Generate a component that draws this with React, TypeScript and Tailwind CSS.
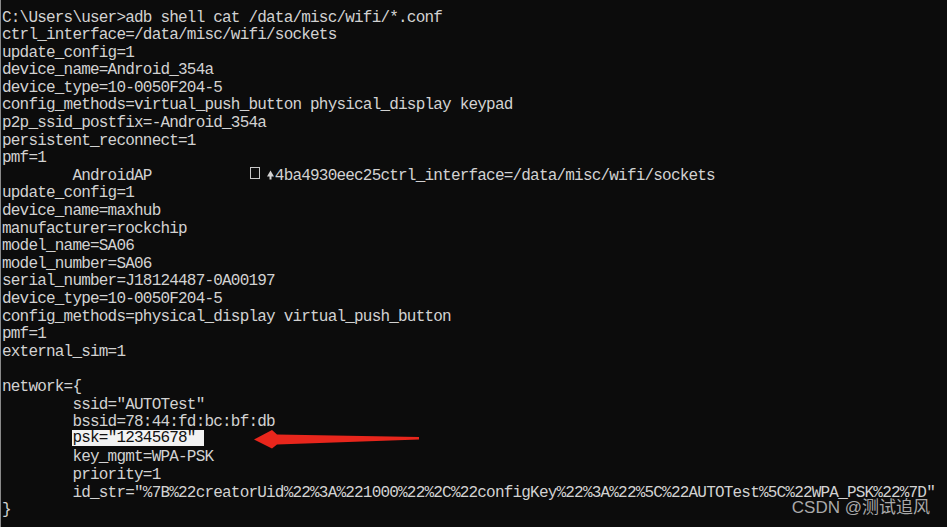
import React from "react";

const before = [
  "C:\\Users\\user>adb shell cat /data/misc/wifi/*.conf",
  "ctrl_interface=/data/misc/wifi/sockets",
  "update_config=1",
  "device_name=Android_354a",
  "device_type=10-0050F204-5",
  "config_methods=virtual_push_button physical_display keypad",
  "p2p_ssid_postfix=-Android_354a",
  "persistent_reconnect=1",
  "pmf=1",
];

const middle = [
  "update_config=1",
  "device_name=maxhub",
  "manufacturer=rockchip",
  "model_name=SA06",
  "model_number=SA06",
  "serial_number=J18124487-0A00197",
  "device_type=10-0050F204-5",
  "config_methods=physical_display virtual_push_button",
  "pmf=1",
  "external_sim=1",
  "",
  "network={",
  '        ssid="AUTOTest"',
  "        bssid=78:44:fd:bc:bf:db",
];

const after = [
  "        key_mgmt=WPA-PSK",
  "        priority=1",
  '        id_str="%7B%22creatorUid%22%3A%221000%22%2C%22configKey%22%3A%22%5C%22AUTOTest%5C%22WPA_PSK%22%7D"',
  "}",
];

function Line({ children }: { children?: React.ReactNode }) {
  return <div className="h-[17.6px] whitespace-pre">{children}</div>;
}

export default function App() {
  return (
    <div className="relative w-[947px] h-[527px] overflow-hidden bg-[#0c0c0c]">
      <div
        className="flex h-full flex-col border-l border-[#8a8a8a] pl-px pt-[9.5px] text-[16px] leading-[17.6px] tracking-[-0.8px] text-[#d2d2d2]"
        style={{ fontFamily: '"Liberation Mono", "Courier New", monospace' }}
      >
        {before.map((l, i) => (
          <Line key={"b" + i}>{l}</Line>
        ))}
        <Line>
          {"        AndroidAP           "}
          <span className="relative -top-[2px] inline-block w-[17.6px] h-[17.6px] align-top">
            <span className="block w-[10px] h-[12px] ml-[2px] mt-[1px] border border-[#c8c8c8]" />
          </span>
          <span className="relative -top-[2px] inline-block w-[8.8px] h-[17.6px] align-top">
            <svg width="9" height="18" viewBox="0 0 9 18" className="block">
              <path d="M1 10.5 L4.5 4.5 L8 10.5 Z" fill="#d2d2d2" />
              <rect x="3.5" y="9" width="2" height="4.5" fill="#d2d2d2" />
            </svg>
          </span>
          {"4ba4930eec25ctrl_interface=/data/misc/wifi/sockets"}
        </Line>
        {middle.map((l, i) => (
          <Line key={"m" + i}>{l}</Line>
        ))}
        <Line>
          {"        "}
          <span className="relative -top-[2px] inline-block h-[16px] leading-[16px] align-top bg-[#f2f2f2] text-[#111111]">
            {'psk="12345678" '}
          </span>
        </Line>
        {after.map((l, i) => (
          <Line key={"a" + i}>{l}</Line>
        ))}
      </div>

      <svg
        className="absolute inset-0 pointer-events-none"
        width="947"
        height="527"
        viewBox="0 0 947 527"
      >
        <path
          d="M254 439.5 L272 430 L277 434.5 L419 437 L419 439.5 L277 444.5 L272 448.5 Z"
          fill="#e8261c"
        />
      </svg>

      <div
        className="absolute top-[500px] right-[17px] text-[17px] leading-[15px] text-[#a9a9a9] whitespace-nowrap"
        style={{ fontFamily: '"Liberation Sans", "Noto Sans CJK SC", sans-serif' }}
      >
        CSDN @测试追风
      </div>
    </div>
  );
}
